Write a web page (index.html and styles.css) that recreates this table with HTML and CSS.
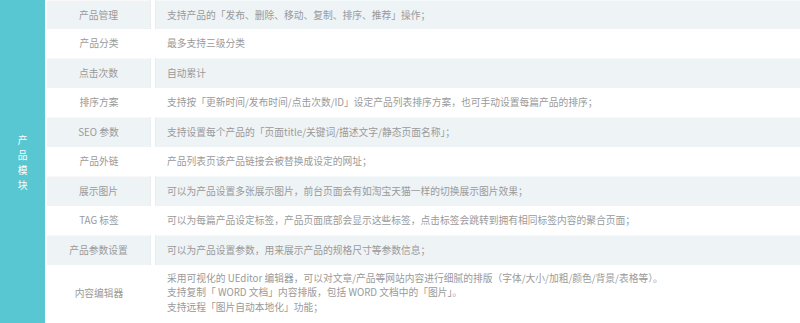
FILE: index.html
```html
<!DOCTYPE html>
<html lang="zh-CN">
<head>
<meta charset="utf-8">
<link rel="stylesheet" href="styles.css">
</head>
<body>
<div class="table">
  <div class="group"><span>产</span><span>品</span><span>模</span><span>块</span></div>
  <div class="rows">
    <div class="row alt first"><div class="label">产品管理</div><div class="desc">支持产品的「发布、删除、移动、复制、排序、推荐」操作；</div></div>
    <div class="row"><div class="label">产品分类</div><div class="desc">最多支持三级分类</div></div>
    <div class="row alt"><div class="label">点击次数</div><div class="desc">自动累计</div></div>
    <div class="row"><div class="label">排序方案</div><div class="desc">支持按「更新时间/发布时间/点击次数/ID」设定产品列表排序方案，也可手动设置每篇产品的排序；</div></div>
    <div class="row alt"><div class="label">SEO 参数</div><div class="desc">支持设置每个产品的「页面title/关键词/描述文字/静态页面名称」；</div></div>
    <div class="row"><div class="label">产品外链</div><div class="desc">产品列表页该产品链接会被替换成设定的网址；</div></div>
    <div class="row alt"><div class="label">展示图片</div><div class="desc">可以为产品设置多张展示图片，前台页面会有如淘宝天猫一样的切换展示图片效果；</div></div>
    <div class="row"><div class="label">TAG 标签</div><div class="desc">可以为每篇产品设定标签，产品页面底部会显示这些标签，点击标签会跳转到拥有相同标签内容的聚合页面；</div></div>
    <div class="row alt"><div class="label">产品参数设置</div><div class="desc">可以为产品设置参数，用来展示产品的规格尺寸等参数信息；</div></div>
    <div class="row tall"><div class="label">内容编辑器</div><div class="desc">采用可视化的 UEditor 编辑器，可以对文章/产品等网站内容进行细腻的排版（字体/大小/加粗/颜色/背景/表格等）。<br>支持复制「 WORD 文档」内容排版，包括 WORD 文档中的「图片」。<br>支持远程「图片自动本地化」功能；</div></div>
  </div>
</div>
</body>
</html>
```

FILE: styles.css
```css
html, body {
  margin: 0;
  padding: 0;
  background: #ffffff;
}

body {
  width: 800px;
  height: 323px;
  overflow: hidden;
  font-family: "Noto Sans CJK SC", "Microsoft YaHei", sans-serif;
  font-size: 9.75px;
  color: #9a9a9a;
}

.table {
  display: flex;
  gap: 2px;
  height: 323px;
}

.group {
  width: 45px;
  flex: none;
  background: #58c7d2;
  color: #ffffff;
  display: flex;
  flex-direction: column;
  align-items: center;
  justify-content: center;
  line-height: 15px;
  padding-top: 2px;
}

.rows {
  flex: 1;
  display: flex;
  flex-direction: column;
}

.row {
  display: grid;
  grid-template-columns: 104px 1fr;
  column-gap: 4px;
  height: 29.5px;
  align-items: stretch;
}

.row.first {
  height: 28.5px;
}

.label,
.desc {
  display: flex;
  align-items: center;
  line-height: 14.5px;
}

.label {
  justify-content: center;
  text-align: center;
}

.desc {
  padding-left: 12px;
}

.row.alt .label,
.row.alt .desc {
  background: #eef3f6;
  border-top: 1px dotted #ffffff;
  box-sizing: border-box;
}

.row.alt .label {
  border-right: 1px dotted #e3e9ec;
}

.row.alt .desc {
  border-left: 1px dotted #e3e9ec;
  padding-left: 11px;
}

.row.tall {
  height: 58px;
}

.row.tall .desc {
  display: block;
  padding-top: 6px;
}
```
